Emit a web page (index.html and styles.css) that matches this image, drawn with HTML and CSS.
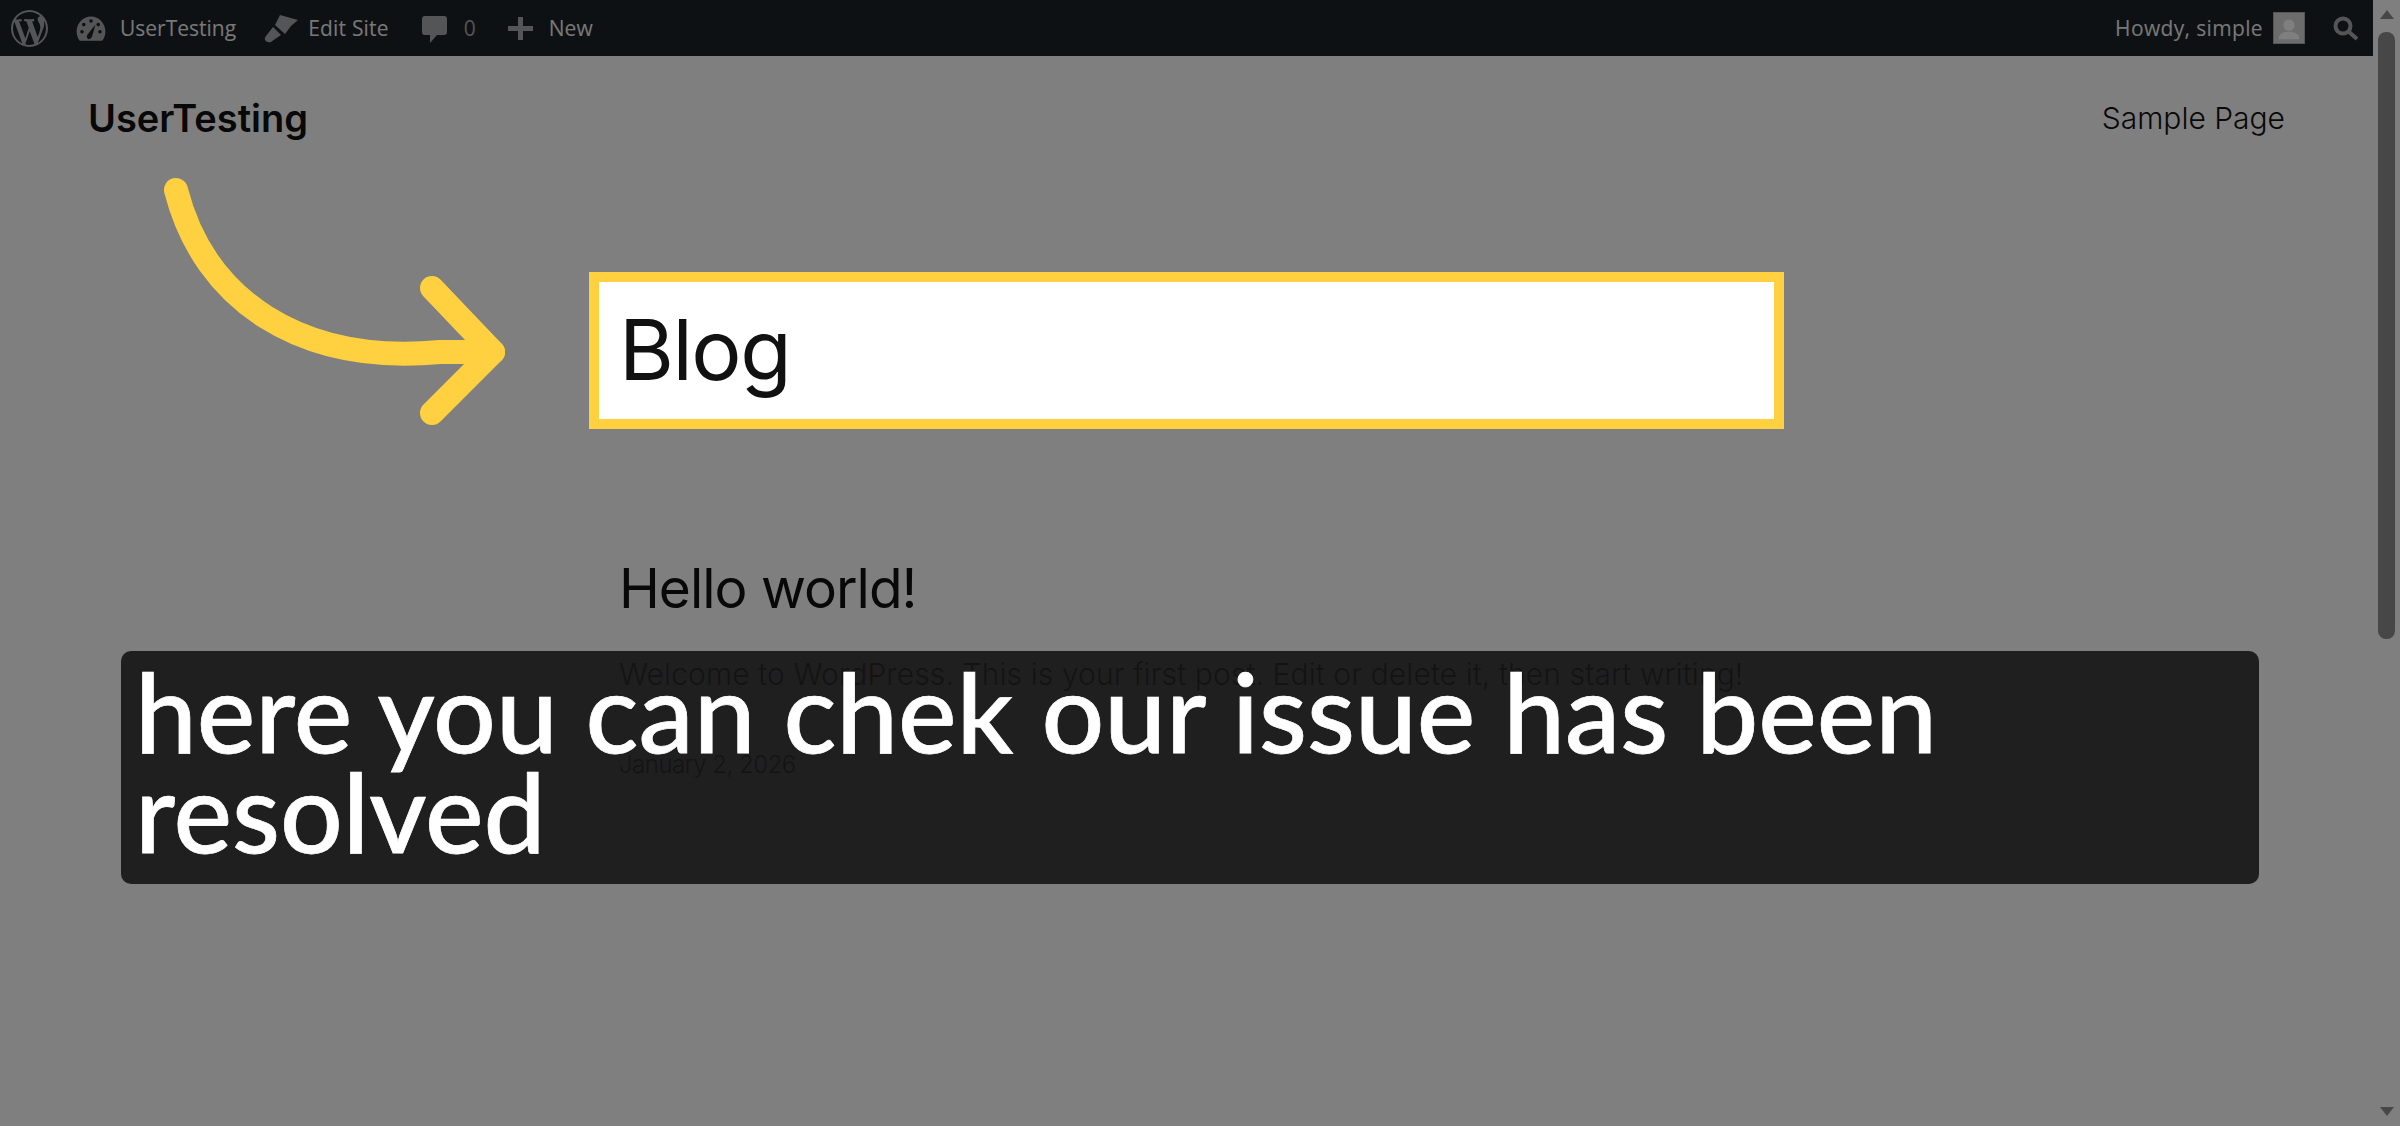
FILE: index.html
```html
<!DOCTYPE html>
<html lang="en">

<head>
    <meta charset="UTF-8">
    <meta name="viewport" content="width=device-width, initial-scale=1.0">
    <title>UserTesting</title>
    <link rel="stylesheet" href="styles.css">
</head>

<body>
    <div class="site">
        <div class="adminbar">
            <div class="adminbar-left">
                <svg class="ab-wp" viewBox="0 0 20 20"><path d="M20 10c0-5.510-4.490-10-10-10C4.480 0 0 4.490 0 10c0 5.520 4.480 10 10 10 5.510 0 10-4.480 10-10zM7.780 15.370L4.370 6.220c.55-.02 1.170-.08 1.170-.08.5-.06.44-1.130-.06-1.110 0 0-1.450.11-2.370.11-.18 0-.37 0-.58-.01C4.120 2.690 6.870 1.110 10 1.110c2.330 0 4.450.87 6.050 2.340-.68-.11-1.650.39-1.650 1.580 0 .74.450 1.360.9 2.100.35.610.55 1.360.55 2.460 0 1.490-1.400 5-1.400 5l-3.030-8.370c.54-.02.82-.17.82-.17.5-.05.44-1.250-.06-1.220 0 0-1.440.12-2.380.12-.87 0-2.330-.12-2.330-.12-.5-.03-.56 1.200-.06 1.220l.92.08 1.260 3.410zM17.410 10c.24-.64.740-1.870.43-4.250.7 1.290 1.050 2.710 1.050 4.250 0 3.290-1.730 6.240-4.400 7.780.97-2.590 1.940-5.150 2.920-7.780zM6.100 18.090C3.120 16.650 1.110 13.530 1.110 10c0-1.300.23-2.480.72-3.590C3.250 10.300 4.670 14.200 6.100 18.090zm4.030-6.630l2.580 6.980c-.86.29-1.760.45-2.710.45-.79 0-1.570-.11-2.310-.33z"/></svg>
                <svg class="ab-dash" viewBox="0 0 20 20"><path fill-rule="evenodd" d="M3.760 16h12.480c1.100-1.430 1.760-3.210 1.760-5.140 0-4.620-3.580-8.360-8-8.360s-8 3.740-8 8.360c0 1.930.66 3.710 1.760 5.140zM10 4a1 1 0 1 1 0 2 1 1 0 0 1 0-2zM6 6a1 1 0 1 1 0 2 1 1 0 0 1 0-2zm8 0a1 1 0 1 1 0 2 1 1 0 0 1 0-2zM8.630 15.110s-1.350-.75-.9-1.890c.45-1.150 4.770-6.200 4.770-6.200s-1.450 5.130-1.870 6.400c-.41 1.270-2 1.690-2 1.690zM5 10a1 1 0 1 1 0 2 1 1 0 0 1 0-2zm10 0a1 1 0 1 1 0 2 1 1 0 0 1 0-2z"/></svg>
                <span class="ab-text ab-name">UserTesting</span>
                <svg class="ab-brush" viewBox="0 0 35 30"><path d="M17 2L35 7L28 13L25 17L22 21L12 12z"/><path d="M10 14L18 22L15 24L8 29Q4 30 2 27Q1 25 3 23z"/></svg>
                <span class="ab-text ab-edit">Edit Site</span>
                <svg class="ab-comment" viewBox="0 0 25 27"><path d="M3 0h19c2 0 3 1 3 3v13c0 2-1 3-3 3h-7l-7 8v-8H3c-2 0-3-1-3-3V3c0-2 1-3 3-3z"/></svg>
                <span class="ab-text ab-count">0</span>
                <svg class="ab-plus" viewBox="0 0 25 23"><path d="M10 0h5v9h10v5H15v9h-5v-9H0V9h10z"/></svg>
                <span class="ab-text">New</span>
            </div>
            <div class="adminbar-right">
                <span class="ab-text ab-howdy">Howdy, simple</span>
                <div class="ab-avatar">
                    <svg viewBox="0 0 32 32"><circle cx="16" cy="13" r="6"/><path d="M5 28c0-6 5-8 11-8s11 2 11 8z"/></svg>
                </div>
                <svg class="ab-search" viewBox="0 0 26 25"><circle cx="10" cy="10" r="7.500"/><path d="M15 15l9 8"/></svg>
            </div>
        </div>

        <header class="site-header">
            <a class="site-title">UserTesting</a>
            <a class="site-nav">Sample Page</a>
        </header>

        <main class="content">
            <h1 class="page-title">Blog</h1>
            <h2 class="post-title">Hello world!</h2>
            <p class="post-body">Welcome to WordPress. This is your first post. Edit or delete it, then start writing!</p>
            <p class="post-date">January 2, 2026</p>
        </main>
    </div>

    <div class="scrollbar">
        <div class="scroll-up"></div>
        <div class="scroll-thumb"></div>
        <div class="scroll-down"></div>
    </div>

    <div class="overlay"></div>

    <svg class="arrow" viewBox="0 0 360 260">
        <path d="M8 10C36 120 132 185 272 172L325 172"/>
        <path d="M264 108L325 172L264 233"/>
    </svg>

    <div class="caption">here you can chek our issue has been resolved</div>
</body>

</html>
```

FILE: styles.css
```css
* {
    box-sizing: border-box;
    margin: 0;
    padding: 0;
}

body {
    position: relative;
    display: flex;
    width: 2400px;
    height: 1126px;
    overflow: hidden;
    background-color: #fff;
    color: #111;
    font-family: Inter, sans-serif;
}

.site {
    flex: 1;
}

/* admin bar */
.adminbar {
    display: flex;
    justify-content: space-between;
    align-items: center;
    height: 56px;
    background-color: #1d2327;
    font-family: "Open Sans", sans-serif;
    font-size: 21px;
    color: #f0f0f1;
}

.adminbar svg {
    fill: #a7aaad;
    flex-shrink: 0;
}

.adminbar-left,
.adminbar-right {
    display: flex;
    align-items: center;
}

.adminbar-left {
    padding-left: 11px;
}

.adminbar-right {
    padding-right: 14px;
}

.ab-text {
    white-space: nowrap;
}

.ab-howdy {
    letter-spacing: .35px;
}

.ab-wp {
    width: 37px;
    height: 37px;
    margin-right: 25px;
}

.ab-dash {
    width: 36px;
    height: 36px;
    margin: 3px 11px 0 0;
}

.ab-name {
    margin-right: 27px;
}

.ab-brush {
    width: 35px;
    height: 30px;
    margin-right: 10px;
}

.ab-edit {
    margin-right: 33px;
    letter-spacing: .2px;
}

.ab-comment {
    width: 25px;
    height: 27px;
    margin: 3px 17px 0 0;
}

.ab-count {
    margin-right: 32px;
    color: #a7aaad;
}

.ab-plus {
    width: 25px;
    height: 23px;
    margin-right: 16px;
}

.ab-avatar {
    display: flex;
    align-items: flex-end;
    width: 32px;
    height: 32px;
    margin: 0 28px 0 10px;
    background-color: #d8d8d8;
    border: 1px solid #aaa;
}

.adminbar .ab-avatar svg {
    fill: #fff;
    width: 30px;
    height: 30px;
}

.adminbar .ab-search {
    width: 26px;
    height: 25px;
    fill: none;
    stroke: #a7aaad;
    stroke-width: 4;
}

/* site */
.site-header {
    display: flex;
    justify-content: space-between;
    align-items: center;
    padding: 39px 88px 0;
}

.site-title {
    font-size: 38px;
    font-weight: 600;
}

.site-nav {
    font-size: 30px;
    font-weight: 300;
}

.content {
    width: 1195px;
    margin: 131px 0 0 589px;
}

.page-title {
    position: relative;
    z-index: 2;
    height: 157px;
    padding: 18px 0 0 20px;
    background-color: #fff;
    border: 10px solid #ffd040;
    font-size: 84px;
    font-weight: 400;
    letter-spacing: -1.5px;
    line-height: 100px;
}

.post-title {
    margin: 127px 0 0 30px;
    font-size: 55px;
    font-weight: 400;
    letter-spacing: -1px;
    line-height: 64px;
}

.post-body {
    margin: 34px 0 0 30px;
    font-size: 30px;
    font-weight: 300;
    letter-spacing: .1px;
    line-height: 40px;
    white-space: nowrap;
}

.post-date {
    margin: 55px 0 0 30px;
    font-size: 24px;
    font-weight: 300;
    letter-spacing: -.5px;
    line-height: 32px;
}

/* fake scrollbar, the window one is not in the picture */
.scrollbar {
    position: relative;
    width: 27px;
    background-color: #fff;
}

.scroll-up,
.scroll-down {
    position: absolute;
    left: 7px;
    width: 0;
    height: 0;
    border-left: 7px solid transparent;
    border-right: 7px solid transparent;
}

.scroll-up {
    top: 10px;
    border-bottom: 9px solid #8f8f8f;
}

.scroll-down {
    bottom: 10px;
    border-top: 9px solid #8f8f8f;
}

.scroll-thumb {
    position: absolute;
    top: 32px;
    left: 5px;
    width: 17px;
    height: 607px;
    background-color: #8f8f8f;
    border-radius: 8px;
}

/* tour overlay */
.overlay {
    position: absolute;
    inset: 0;
    z-index: 1;
    background-color: rgba(0, 0, 0, 0.5);
}

.arrow {
    position: absolute;
    top: 180px;
    left: 168px;
    z-index: 2;
    width: 360px;
    height: 260px;
    overflow: visible;
    fill: none;
    stroke: #ffd040;
    stroke-width: 24;
    stroke-linecap: round;
    stroke-linejoin: round;
}

.caption {
    position: absolute;
    top: 651px;
    left: 121px;
    z-index: 3;
    width: 2138px;
    height: 233px;
    padding: 10px 14px;
    background-color: rgba(21, 21, 21, 0.9);
    border-radius: 10px;
    color: #fff;
    font-family: Lato, sans-serif;
    font-size: 110.500px;
    font-weight: 500;
    line-height: 100px;
    -webkit-text-stroke: .75px #fff;
}
```
